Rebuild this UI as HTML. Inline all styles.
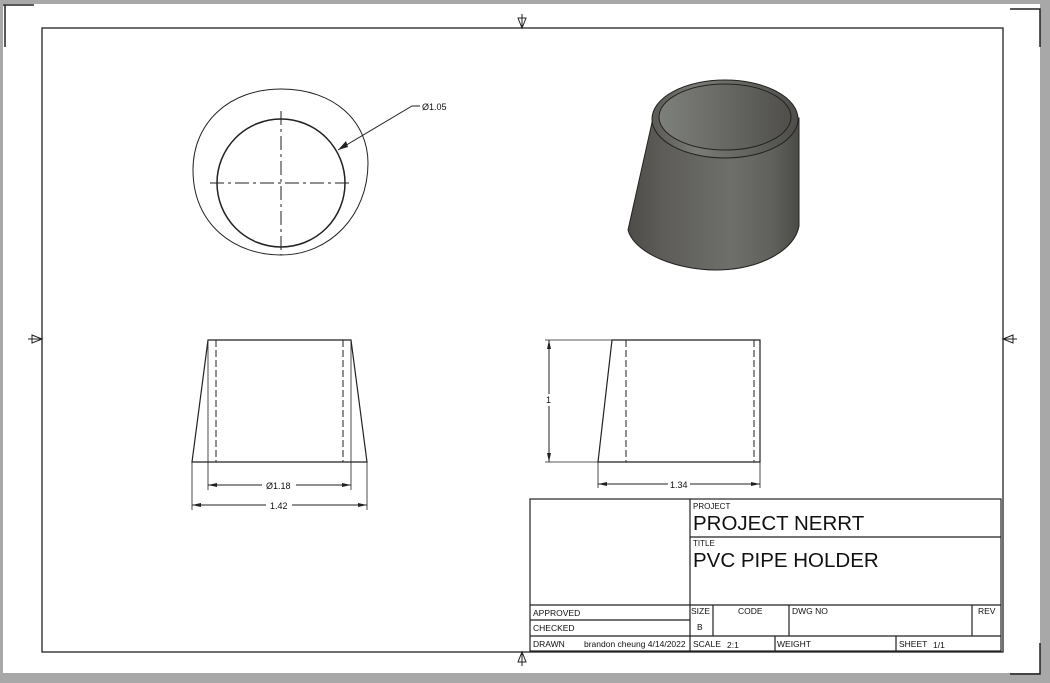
<!DOCTYPE html>
<html><head><style>
html,body{margin:0;padding:0;background:#a8a8a8;width:1050px;height:683px;overflow:hidden}
svg{position:absolute;left:0;top:0}
text{font-family:"Liberation Sans",sans-serif;fill:#111}
</style></head><body>
<svg width="1050" height="683" viewBox="0 0 1050 683">
<defs>
<linearGradient id="g1" x1="0" x2="1">
<stop offset="0" stop-color="#4e4c48"/><stop offset="0.2" stop-color="#5d5c58"/><stop offset="0.6" stop-color="#6e6f6a"/><stop offset="0.85" stop-color="#5f605c"/><stop offset="1" stop-color="#4a4a46"/>
</linearGradient>
<linearGradient id="g2" x1="0" x2="1">
<stop offset="0" stop-color="#5a5955"/><stop offset="0.3" stop-color="#7a7b76"/><stop offset="1" stop-color="#4e4d49"/>
</linearGradient>
<linearGradient id="g3" x1="0" x2="1">
<stop offset="0" stop-color="#7e807b"/><stop offset="0.4" stop-color="#6c6d69"/><stop offset="1" stop-color="#4f4e4b"/>
</linearGradient>
</defs>
<rect x="3" y="4" width="1037" height="669" fill="#fff"/>
<g stroke="#222" stroke-width="1.5" fill="none">
<path d="M3 5H34M5 5V47"/>
<path d="M1010 9H1040V47"/>
<path d="M1010 674H1040V643"/>
</g>
<rect x="42" y="28" width="961" height="624" fill="none" stroke="#222" stroke-width="1.3"/>
<g stroke="#222" stroke-width="1" fill="none">
<path d="M522 14V28M518 18L522 28L526 18Z"/>
<path d="M522 666V652M518 662L522 652L526 662Z"/>
<path d="M28 339H42M32 335L42 339L32 343Z"/>
<path d="M1017 339H1003M1013 335L1003 339L1013 343Z"/>
</g>
<g fill="none" stroke="#222">
<path d="M281 89C335 89 368 122 368 163C368 215 330 255 281 255C235 255 193 225 193 170C193 122 230 89 281 89Z" stroke-width="1"/>
<circle cx="281" cy="183" r="64" stroke-width="1.5"/>
<path d="M210 183H352M281 111V255" stroke-width="1" stroke-dasharray="14 4 3 4"/>
<path d="M338 150L412 106H420" stroke-width="1"/>
</g>
<path d="M338 150L346 141L348 147Z" fill="#222"/>
<text x="422" y="110" font-size="9">Ø1.05</text>
<!-- 3D -->
<path d="M653 118L628 230C635 255 680 270 715 270C760 270 795 250 799 226V118Z" fill="url(#g1)" stroke="#222" stroke-width="1"/>
<ellipse cx="725" cy="119" rx="73" ry="39" fill="url(#g2)" stroke="#222" stroke-width="1"/>
<ellipse cx="725" cy="117" rx="66" ry="33" fill="url(#g3)" stroke="#222" stroke-width="1"/>
<g fill="none" stroke="#222" stroke-width="1">
<path d="M522 14V28"/>
</g>
<g fill="none" stroke="#222" stroke-width="1.2">
<path d="M208 340H351L367 462H192Z"/>
<path d="M216 340V462M343 340V462" stroke-dasharray="7 3" stroke-width="1"/>
<path d="M208 340V490M351 340V490M192 462V510M367 462V510" stroke-width="0.8"/>
<path d="M208 485H262M296 485H351M192 505H266M292 505H367" stroke-width="1"/>
</g>
<g fill="#222"><path d="M208 485L217 483L217 487Z"/><path d="M351 485L342 483L342 487Z"/><path d="M192 505L201 503L201 507Z"/><path d="M367 505L358 503L358 507Z"/></g>
<text x="266" y="489" font-size="9">Ø1.18</text>
<text x="270" y="509" font-size="9">1.42</text>
<g fill="none" stroke="#222" stroke-width="1.2">
<path d="M612 340H760V462H598Z"/>
<path d="M626 340V462M754 340V462" stroke-dasharray="7 3" stroke-width="1"/>
<path d="M545 340H612M545 462H598M598 462V488M760 462V488" stroke-width="0.8"/>
<path d="M549 340V394M549 406V462M598 484H668M690 484H760" stroke-width="1"/>
</g>
<g fill="#222"><path d="M549 340L547 349L551 349Z"/><path d="M549 462L547 453L551 453Z"/><path d="M598 484L607 482L607 486Z"/><path d="M760 484L751 482L751 486Z"/></g>
<text x="546" y="403" font-size="9">1</text>
<text x="670" y="488" font-size="9">1.34</text>
<g fill="none" stroke="#222" stroke-width="1.2">
<rect x="530" y="499" width="471" height="152"/>
<path d="M690 499V651M690 537H1001M530 605H1001M530 620H690M530 636H1001M713 605V636M789 605V636M972 605V636M775 636V651M896 636V651"/>
</g>
<g font-size="8.5">
<text x="693" y="509" font-size="8">PROJECT</text>
<text x="693" y="530" font-size="20.5">PROJECT NERRT</text>
<text x="693" y="546" font-size="8">TITLE</text>
<text x="693" y="567" font-size="20.5">PVC PIPE HOLDER</text>
<text x="533" y="616">APPROVED</text>
<text x="533" y="631">CHECKED</text>
<text x="533" y="647">DRAWN</text>
<text x="584" y="647">brandon cheung  4/14/2022</text>
<text x="691" y="614">SIZE</text>
<text x="697" y="630">B</text>
<text x="738" y="614">CODE</text>
<text x="792" y="614">DWG NO</text>
<text x="978" y="614">REV</text>
<text x="693" y="647">SCALE</text>
<text x="727" y="648">2:1</text>
<text x="777" y="647">WEIGHT</text>
<text x="899" y="647">SHEET</text>
<text x="933" y="648">1/1</text>
</g>
</svg>
</body></html>
